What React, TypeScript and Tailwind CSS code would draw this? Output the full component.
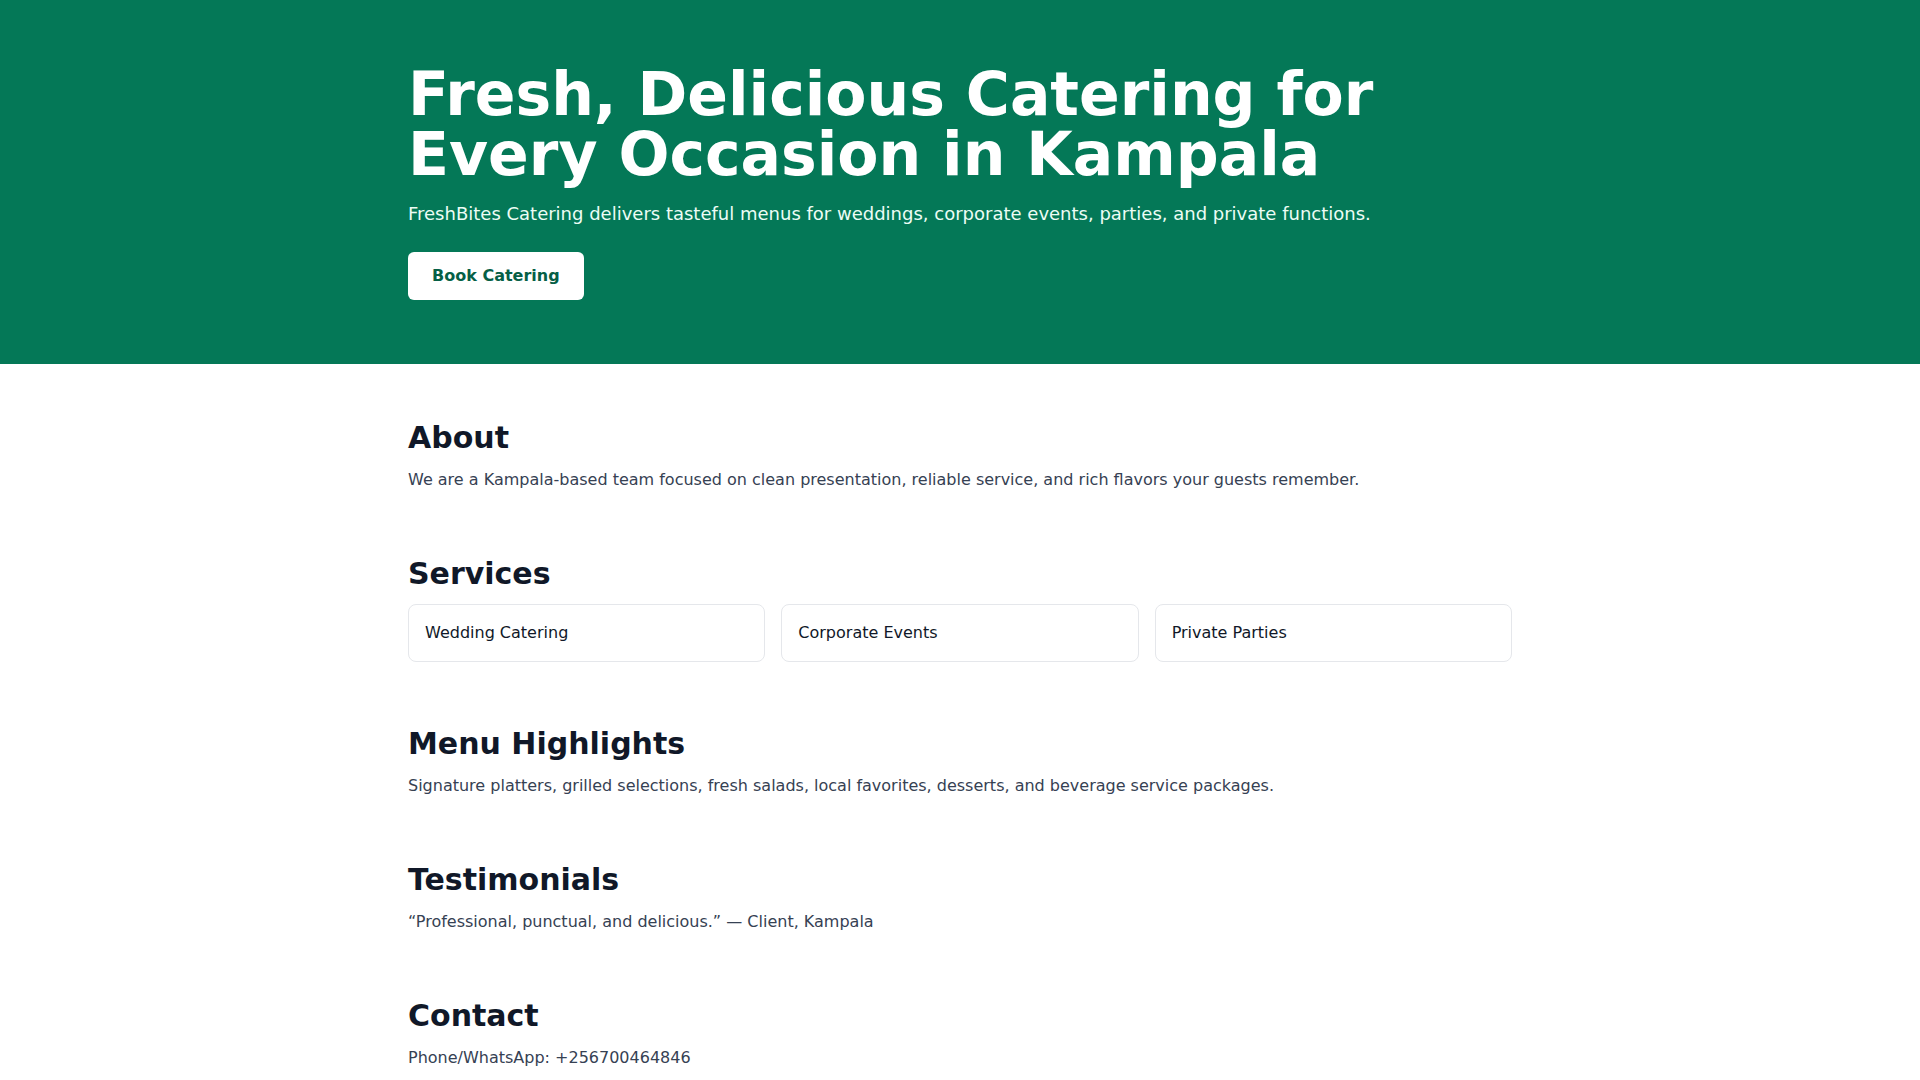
export default function App() {
  const services = ["Wedding Catering", "Corporate Events", "Private Parties"];
  return (
    <div className="min-h-screen bg-white font-['DejaVu_Sans',sans-serif] text-gray-900">
      <header className="bg-[#047857] text-white">
        <div className="mx-auto max-w-6xl px-6 py-16">
          <h1 className="text-6xl font-bold leading-none">
            Fresh, Delicious Catering for Every Occasion in Kampala
          </h1>
          <p className="mt-4 text-lg text-emerald-50">
            FreshBites Catering delivers tasteful menus for weddings, corporate events, parties, and private functions.
          </p>
          <button className="mt-6 rounded-md bg-white px-6 py-3 text-base font-semibold text-[#065f46]">
            Book Catering
          </button>
        </div>
      </header>

      <main className="mx-auto max-w-6xl space-y-16 px-6 pt-14 pb-16">
        <section>
          <h2 className="text-3xl font-bold text-gray-900">About</h2>
          <p className="mt-3 text-base text-gray-700">
            We are a Kampala-based team focused on clean presentation, reliable service, and rich flavors your guests remember.
          </p>
        </section>

        <section>
          <h2 className="text-3xl font-bold text-gray-900">Services</h2>
          <div className="mt-3 grid grid-cols-3 gap-4">
            {services.map((s) => (
              <div key={s} className="rounded-lg border border-gray-200 p-4 text-base text-gray-900">
                {s}
              </div>
            ))}
          </div>
        </section>

        <section>
          <h2 className="text-3xl font-bold text-gray-900">Menu Highlights</h2>
          <p className="mt-3 text-base text-gray-700">
            Signature platters, grilled selections, fresh salads, local favorites, desserts, and beverage service packages.
          </p>
        </section>

        <section>
          <h2 className="text-3xl font-bold text-gray-900">Testimonials</h2>
          <p className="mt-3 text-base text-gray-700">
            “Professional, punctual, and delicious.” — Client, Kampala
          </p>
        </section>

        <section>
          <h2 className="text-3xl font-bold text-gray-900">Contact</h2>
          <p className="mt-3 text-base text-gray-700">Phone/WhatsApp: +256700464846</p>
        </section>
      </main>
    </div>
  );
}
